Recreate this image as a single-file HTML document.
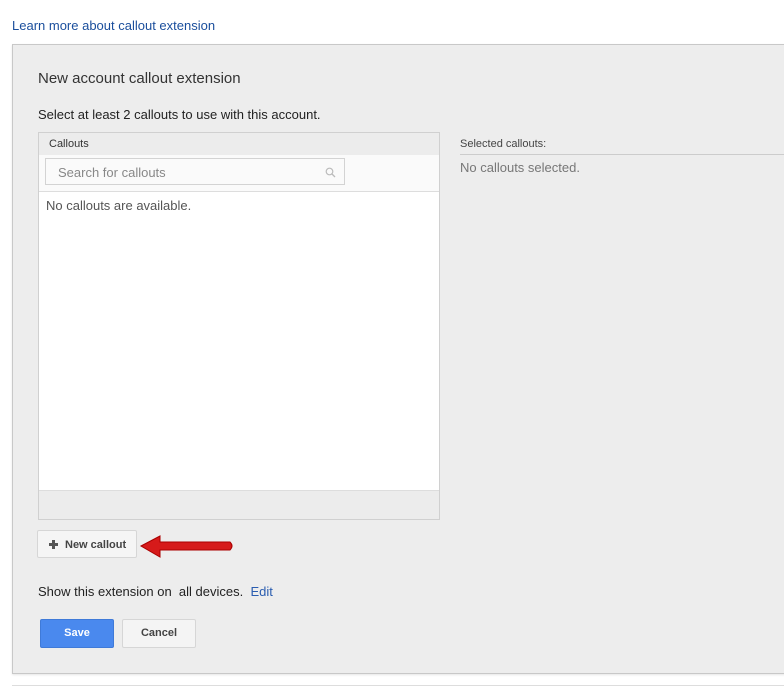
<!DOCTYPE html>
<html><head><style>
body{margin:0;width:784px;height:687px;background:#fff;font-family:"Liberation Sans",Arial,sans-serif;position:relative;overflow:hidden}
.a{position:absolute}
</style></head><body>
<div class="a" style="left:12px;top:18px;font-size:13px;color:#1a4e9c">Learn more about callout extension</div>
<div class="a" style="left:12px;top:44px;width:790px;height:628px;background:#ededed;border:1px solid #c8c8c8;box-shadow:0 1px 2px rgba(0,0,0,.1)"></div>
<div class="a" style="left:38px;top:70px;font-size:15px;color:#333">New account callout extension</div>
<div class="a" style="left:38px;top:107px;font-size:13px;color:#222">Select at least 2 callouts to use with this account.</div>
<div class="a" style="left:38px;top:132px;width:400px;height:386px;border:1px solid #d0d0d0;background:#fff">
 <div style="height:22px;background:#ececec;font-size:11px;color:#333;padding-left:10px;line-height:22px">Callouts</div>
 <div style="height:36px;background:#fafafa;border-bottom:1px solid #ddd;position:relative">
  <div class="a" style="left:6px;top:3px;width:298px;height:27px;border:1px solid #d3d3d3;background:#fafafa;font-size:13px;color:#888;line-height:27px;padding-left:12px;box-sizing:border-box;width:300px">Search for callouts
   <svg class="a" style="right:8px;top:8px" width="11" height="11" viewBox="0 0 11 11"><circle cx="4.5" cy="4.5" r="3.3" fill="none" stroke="#bbb" stroke-width="1.2"/><path d="M7 7l3 3" stroke="#bbb" stroke-width="1.3"/></svg></div>
 </div>
 <div style="font-size:13px;color:#555;padding:6px 0 0 7px">No callouts are available.</div>
 <div class="a" style="left:0;bottom:0;width:400px;height:28px;background:#ececec;border-top:1px solid #ddd"></div>
</div>
<div class="a" style="left:460px;top:138px;font-size:11px;color:#444">Selected callouts:</div>
<div class="a" style="left:460px;top:154px;width:330px;border-top:1px solid #ccc"></div>
<div class="a" style="left:460px;top:160px;font-size:13px;color:#777">No callouts selected.</div>
<div class="a" style="left:37px;top:530px;width:99px;height:28px;border:1px solid #d6d6d6;background:#f5f5f5;border-radius:2px;font-size:11px;font-weight:bold;color:#444;line-height:28px;box-sizing:border-box;width:100px;padding-left:27px">New callout
 <span class="a" style="left:11px;top:9px;width:9px;height:9px;"><span class="a" style="left:3px;top:0;width:3px;height:9px;background:#555"></span><span class="a" style="left:0;top:3px;width:9px;height:3px;background:#555"></span></span></div>
<svg class="a" style="left:138px;top:533px" width="100" height="28" viewBox="0 0 100 28"><path d="M3 13L22 3V9H92Q96 13 92 17H22V24Z" fill="#d61a1a" stroke="#a00" stroke-width="1"/></svg>
<div class="a" style="left:38px;top:584px;font-size:13px;color:#222">Show this extension on &nbsp;all devices. &nbsp;<span style="color:#2a5db0">Edit</span></div>
<div class="a" style="left:40px;top:619px;width:74px;height:29px;background:#4a89ee;border:1px solid #3f7ad8;border-radius:2px;box-sizing:border-box;color:#fff;font-size:11px;font-weight:bold;text-align:center;line-height:27px">Save</div>
<div class="a" style="left:122px;top:619px;width:74px;height:29px;background:#f4f4f4;border:1px solid #d6d6d6;border-radius:2px;box-sizing:border-box;color:#444;font-size:11px;font-weight:bold;text-align:center;line-height:27px">Cancel</div>
<div class="a" style="left:12px;top:685px;width:780px;border-top:1px solid #ddd"></div>
</body></html>
